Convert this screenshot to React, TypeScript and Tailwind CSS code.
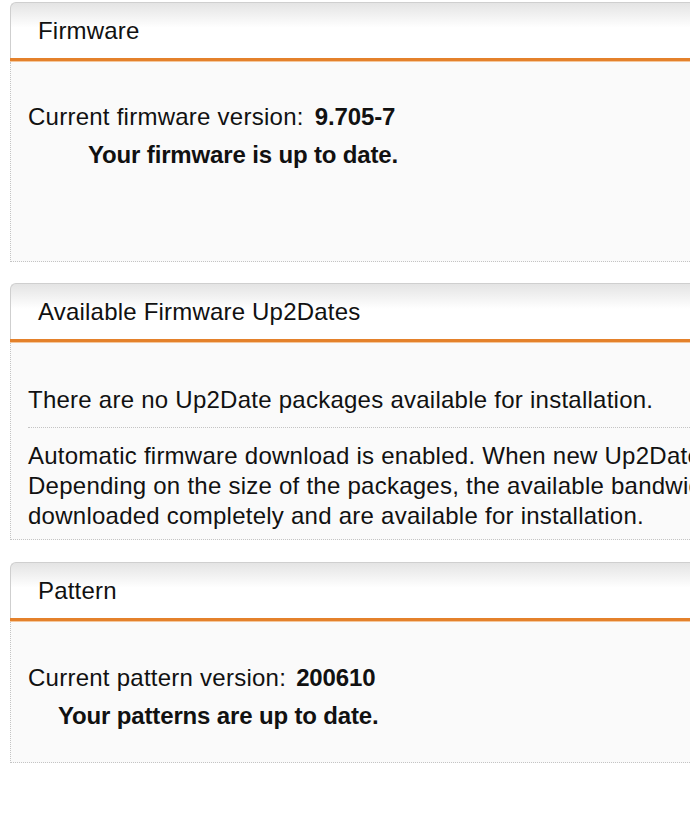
import React from 'react'

const font = { fontFamily: '"Liberation Sans", Arial, sans-serif' }

function Panel({ title, gap, children }: { title: string; gap: string; children: React.ReactNode }) {
  return (
    <section className={gap}>
      <div className="h-[56px] rounded-tl-[6px] border-l border-t border-[#cfcfcf] bg-gradient-to-b from-[#e4e4e4] via-white via-[45%] to-white flex items-center pl-[27px] text-[24px] tracking-[0.2px] text-[#111]">
        {title}
      </div>
      <div className="h-[3px] bg-[#e4812b]" />
      <div className="h-px bg-[#f4c79c]" />
      <div className="bg-[#fafafa] border-l border-b border-dotted border-[#c4c4c4] pl-[17px]">
        {children}
      </div>
    </section>
  )
}

export default function App() {
  return (
    <div style={font} className="w-[690px] h-[824px] overflow-hidden bg-white">
      <div className="w-[900px] pl-[10px] pt-[2px] text-[24px] leading-[30px] tracking-[0.25px] text-[#111]">
        <Panel title="Firmware" gap="mb-[21px]">
          <div className="pt-[40px] pb-[91px]">
            <p>
              Current firmware version:<span className="ml-[11px] font-bold tracking-[-0.1px]">9.705-7</span>
            </p>
            <p className="mt-[8px] ml-[60px] font-bold tracking-[-0.15px]">Your firmware is up to date.</p>
          </div>
        </Panel>

        <Panel title="Available Firmware Up2Dates" gap="mb-[22px]">
          <div className="pt-[42px] pb-[8px]">
            <p>There are no Up2Date packages available for installation.</p>
            <div className="mt-[12px] mb-[13px] border-t border-dotted border-[#c4c4c4]" />
            <p className="whitespace-nowrap">
              Automatic firmware download is enabled. When new Up2Date packages are available, they will be downloaded automatically.
              <br />
              Depending on the size of the packages, the available bandwidth and the load of the system it can take a while until they are
              <br />
              downloaded completely and are available for installation.
            </p>
          </div>
        </Panel>

        <Panel title="Pattern" gap="mb-0">
          <div className="pt-[41px] pb-[31px]">
            <p>
              Current pattern version:<span className="ml-[10px] font-bold tracking-[-0.1px]">200610</span>
            </p>
            <p className="mt-[8px] ml-[30px] font-bold tracking-[-0.15px]">Your patterns are up to date.</p>
          </div>
        </Panel>
      </div>
    </div>
  )
}
